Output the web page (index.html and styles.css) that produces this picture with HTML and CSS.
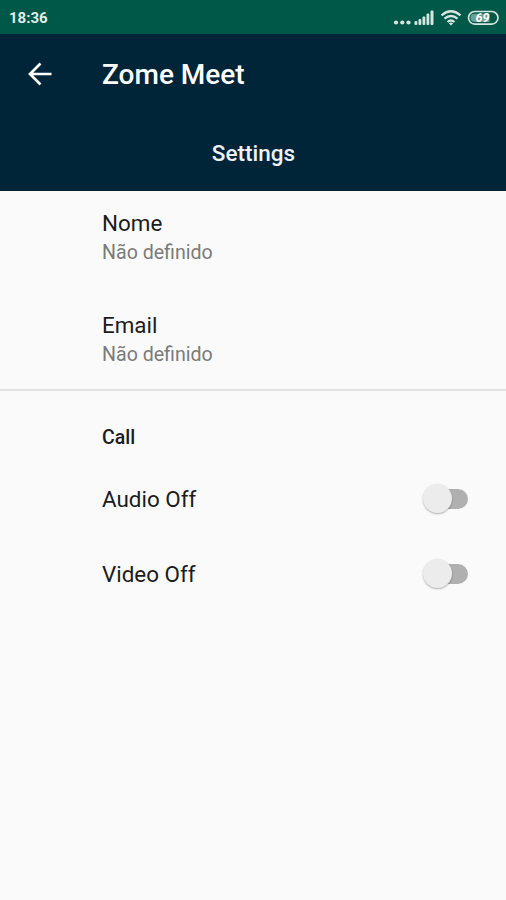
FILE: index.html
```html
<!DOCTYPE html>
<html lang="pt">
<head>
  <meta charset="utf-8">
  <title>Zome Meet</title>
  <link rel="stylesheet" href="styles.css">
</head>
<body>
  <!-- Status bar -->
  <div class="status-bar">
    <span class="clock">18:36</span>
    <svg class="status-icons" width="108" height="20" viewBox="0 0 108 20">
      <g fill="#d5e6e1">
        <circle cx="4" cy="14.5" r="2.1"/>
        <circle cx="10.300" cy="14.5" r="2.1"/>
        <circle cx="16.500" cy="14.5" r="2.1"/>
        <rect x="22.5" y="13" width="2.8" height="4" rx="1"/>
        <rect x="26.5" y="11" width="2.8" height="6" rx="1"/>
        <rect x="30.5" y="8.5" width="2.8" height="8.5" rx="1"/>
        <rect x="34.5" y="5.5" width="2.8" height="11.5" rx="1"/>
        <rect x="38.5" y="2.5" width="3" height="14.5" rx="1"/>
      </g>
      <g fill="none" stroke="#d5e6e1" stroke-width="2.3">
        <path d="M49.500 7.3q9.500-8 19 0"/>
        <path d="M52.500 10.700q6.500-5.400 13 0"/>
        <path d="M55.500 14q3.500-3 7 0"/>
      </g>
      <path d="M56.800 15.300q2.200-1.500 4.400 0L59 17.500z" fill="#d5e6e1"/>
      <rect x="76.500" y="3.500" width="29.500" height="12.600" rx="6.300" fill="none" stroke="#d5e6e1" stroke-width="1.700"/>
      <path d="M82.500 5.700h15v8.200h-15a4.100 4.100 0 0 1 0-8.200z" fill="#6aa093"/>
      <text class="battery-text" x="83.500" y="14.300">69</text>
    </svg>
  </div>

  <!-- App header -->
  <div class="header">
    <div class="toolbar">
      <svg class="back" width="24" height="24" viewBox="0 0 24 24">
        <path d="M23.500 12H2M12.500 1.500L2 12l10.500 10.500" fill="none" stroke="#fff" stroke-width="2.700"/>
      </svg>
      <h1>Zome Meet</h1>
    </div>
    <div class="tab">Settings</div>
  </div>

  <div class="section profile">
    <div class="item">
      <div class="item-title">Nome</div>
      <div class="item-value">Não definido</div>
    </div>
    <div class="item">
      <div class="item-title">Email</div>
      <div class="item-value">Não definido</div>
    </div>
  </div>

  <div class="section call">
    <h2>Call</h2>
    <div class="toggle-row">
      <span class="item-title">Audio Off</span>
      <span class="switch"><span class="thumb"></span></span>
    </div>
    <div class="toggle-row">
      <span class="item-title">Video Off</span>
      <span class="switch"><span class="thumb"></span></span>
    </div>
  </div>
</body>
</html>
```
FILE: styles.css
```css
* {
  box-sizing: border-box;
}

body {
  margin: 0;
  min-height: 900px;
  background-color: #fafafa;
  color: #1c1c1c;
  font-family: Roboto, "Liberation Sans", sans-serif;
}

h1,
h2 {
  margin: 0;
  font-weight: 500;
}

/* Status bar */
.status-bar {
  display: flex;
  justify-content: space-between;
  align-items: center;
  height: 34px;
  padding: 0 6px 0 9px;
  background-color: #005849;
}

.clock {
  padding-top: 2px;
  color: #e0efeb;
  font-size: 15px;
  font-weight: 700;
}

.status-icons {
  margin-top: 1px;
}

.battery-text {
  fill: #fff;
  font-size: 12.5px;
  font-weight: 700;
  font-style: italic;
}

/* Header */
.header {
  height: 157px;
  background-color: #002438;
  color: #fff;
}

.toolbar {
  display: flex;
  align-items: center;
  height: 80px;
  padding-left: 28px;
}

.toolbar h1 {
  margin-left: 50px;
  padding-top: 1px;
  font-size: 28px;
}

.tab {
  padding-left: 1px;
  color: #eef2f5;
  font-size: 22.5px;
  font-weight: 500;
  line-height: 78px;
  text-align: center;
}

/* Settings list */
.section {
  padding-left: 102px;
}

.profile {
  height: 200px;
  padding-top: 18px;
  border-bottom: 2px solid #e2e2e2;
}

.item {
  height: 102px;
}

.item-title {
  font-size: 22.4px;
  line-height: 28px;
}

.item-value {
  color: #7b7b7b;
  font-size: 19.6px;
  line-height: 32px;
}

.call {
  padding-top: 34px;
  padding-right: 38px;
}

.call h2 {
  height: 36px;
  font-size: 19.5px;
  line-height: 26px;
}

.toggle-row {
  display: flex;
  justify-content: space-between;
  align-items: center;
  height: 75px;
}

.switch {
  position: relative;
  width: 42px;
  height: 20px;
  border-radius: 10px;
  background-color: #b0b0b0;
}

.thumb {
  position: absolute;
  top: -5px;
  left: -3px;
  width: 29px;
  height: 29px;
  border-radius: 50%;
  background-color: #ececec;
  box-shadow: 0 1px 2px rgba(0, 0, 0, 0.3);
}
```
